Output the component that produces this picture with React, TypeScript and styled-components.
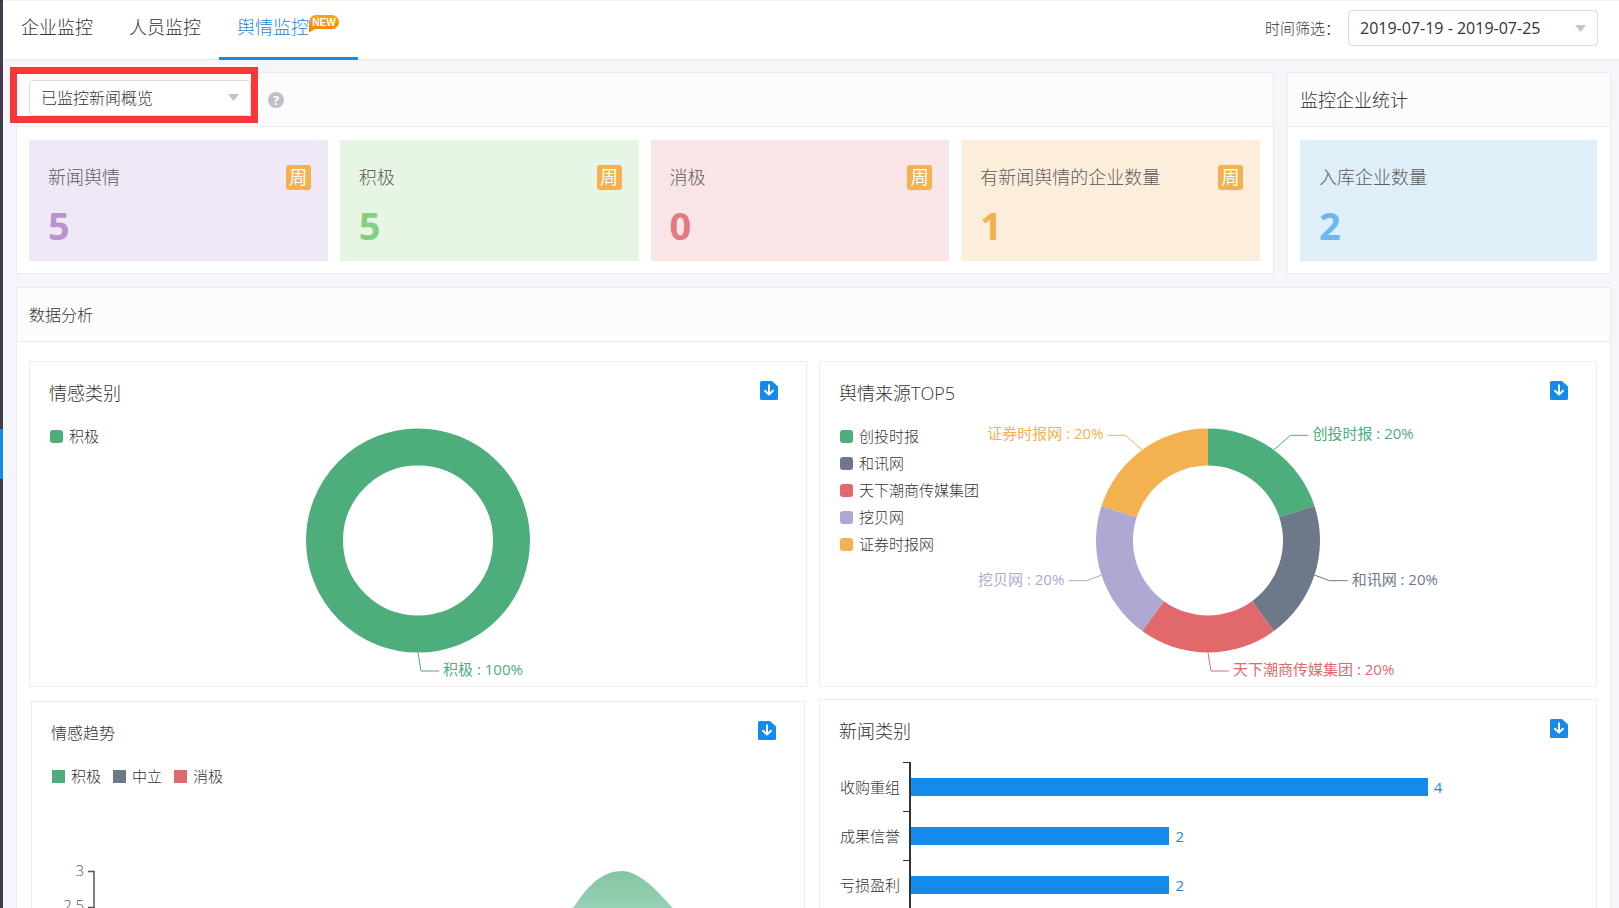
import React from 'react';
import styled, { createGlobalStyle } from 'styled-components';

const palette = {
  blue: '#148aeb',
  green: '#4dae7b',
  slate: '#6d7988',
  red: '#e1696b',
  violet: '#aea8d2',
  orange: '#f4b150',
  line: '#ececee',
};

const GlobalStyle = createGlobalStyle`
  *, *::before, *::after { box-sizing: border-box; }
  body {
    margin: 0;
    background: #f5f5fa;
    color: #333;
    font-family: "Open Sans", "Noto Sans CJK SC", sans-serif;
    font-weight: 300;
    font-size: 16px;
    line-height: 24px;
  }
  h2, h3, ul, dl, dd, p { margin: 0; padding: 0; font-weight: inherit; }
  button, select { font: inherit; color: inherit; }
`;

const Shell = styled.div`
  display: flex;
  height: 100vh;
  overflow: hidden;
`;

const Rail = styled.aside`
  flex: 0 0 3px;
  display: flex;
  align-items: center;
  background: #403c4e;
`;

const RailMarker = styled.span`
  width: 3px;
  height: 50px;
  background: ${palette.blue};
`;

const Page = styled.div`
  flex: 1;
  min-width: 0;
`;

const TopBar = styled.header`
  display: flex;
  align-items: stretch;
  justify-content: space-between;
  height: 60px;
  padding-right: 21px;
  background: #fff;
  border-top: 1px solid #f2f2f4;
  border-bottom: 1px solid #e9e9ee;
`;

const Tabs = styled.nav`
  display: flex;
`;

const Tab = styled.a<{ $active?: boolean }>`
  display: flex;
  align-items: flex-start;
  height: 59px;
  padding: 14px 18px 0;
  font-size: 18px;
  text-decoration: none;
  color: ${(p) => (p.$active ? '#1f87dc' : '#333')};
  border-bottom: 3px solid ${(p) => (p.$active ? '#1f87dc' : 'transparent')};
`;

const NewBadge = styled.svg`
  width: 31px;
  height: 18px;
`;

const Filter = styled.label`
  display: flex;
  align-items: center;
  gap: 8px;
  height: 54px;
  font-size: 15px;
`;

const SelectBox = styled.span<{ $width: number; $regular?: boolean }>`
  display: grid;
  width: ${(p) => p.$width}px;
  font-size: 16px;
  font-weight: ${(p) => (p.$regular ? 400 : 300)};

  > * { grid-area: 1 / 1; }
  > svg { justify-self: end; align-self: center; margin-right: 12px; pointer-events: none; }
`;

const Select = styled.select`
  width: 100%;
  height: 36px;
  padding: 0 11px;
  appearance: none;
  background: #fff;
  border: 1px solid #dcdce0;
  border-radius: 4px;
`;

const Main = styled.main`
  display: flex;
  flex-direction: column;
  gap: 13px;
  padding: 12px 8px 12px 13px;
`;

const Overview = styled.div`
  display: grid;
  grid-template-columns: minmax(0, 1fr) 324px;
  gap: 13px;
`;

const Panel = styled.section`
  background: #fff;
  border: 1px solid ${palette.line};
`;

const PanelHead = styled.div`
  display: flex;
  align-items: center;
  height: 54px;
  padding: 0 12px;
  background: #fcfcfc;
  border-bottom: 1px solid ${palette.line};
`;

const PanelTitle = styled.h2<{ $large?: boolean }>`
  font-size: ${(p) => (p.$large ? 18 : 16)}px;
`;

const Highlighted = styled.div`
  position: relative;
  margin: 0 17px 4px 0;

  &::after {
    content: "";
    position: absolute;
    inset: -13px -7px -7px -19px;
    border: 7px solid #fb3638;
    pointer-events: none;
  }
`;

const HelpButton = styled.button`
  width: 16px;
  height: 16px;
  padding: 0;
  border: 0;
  border-radius: 50%;
  background: #bdc0ca;
  color: #fff;
  font-size: 13px;
  font-weight: 700;
  line-height: 16px;
`;

const Stats = styled.div`
  display: grid;
  grid-auto-flow: column;
  grid-auto-columns: minmax(0, 1fr);
  gap: 12px;
  padding: 13px 13px 12px 12px;
`;

const Stat = styled.dl<{ $bg: string }>`
  height: 121px;
  padding: 25px 17px 0 19px;
  background: ${(p) => p.$bg};
`;

const StatLabel = styled.dt`
  display: flex;
  justify-content: space-between;
  height: 25px;
  font-size: 18px;
  color: #5c5c5c;
`;

const StatValue = styled.dd<{ $color: string }>`
  margin-top: 11px;
  font-family: "Noto Sans", "Open Sans", sans-serif;
  font-size: 38px;
  font-weight: 700;
  line-height: 48px;
  color: ${(p) => p.$color};
`;

const WeekBadge = styled.span`
  width: 25px;
  height: 25px;
  border-radius: 3px;
  background: ${palette.orange};
  color: #fff;
  font-weight: 400;
  line-height: 25px;
  text-align: center;
`;

const Charts = styled.div`
  display: grid;
  grid-template-columns: repeat(2, minmax(0, 1fr));
  gap: 12px;
  padding: 19px 13px 12px 12px;
`;

const ChartCard = styled.article<{ $inset?: boolean }>`
  margin: ${(p) => (p.$inset ? '2px' : '0')};
  background: #fff;
  border: 1px solid ${palette.line};
`;

const ChartHead = styled.div`
  display: flex;
  justify-content: space-between;
  align-items: flex-start;
  padding: 19px 28px 0 19px;
`;

const ChartTitle = styled.h3<{ $small?: boolean }>`
  font-size: ${(p) => (p.$small ? 16 : 18)}px;
`;

const IconButton = styled.button`
  display: block;
  padding: 0;
  border: 0;
  background: none;

  svg { display: block; }
`;

const ChartBody = styled.div`
  display: grid;
  > * { grid-area: 1 / 1; }
`;

const Legend = styled.ul<{ $row?: boolean }>`
  display: flex;
  flex-direction: ${(p) => (p.$row ? 'row' : 'column')};
  justify-self: start;
  align-self: start;
  gap: ${(p) => (p.$row ? 12 : 0)}px;
  margin: 18px 0 0 20px;
  list-style: none;
  font-size: 15px;
`;

const LegendItem = styled.li<{ $color: string; $square?: boolean }>`
  display: flex;
  align-items: center;
  gap: 6px;
  line-height: 27px;

  &::before {
    content: "";
    width: 13px;
    height: 13px;
    border-radius: ${(p) => (p.$square ? 0 : 3)}px;
    background: ${(p) => p.$color};
  }
`;

const DonutSvg = styled.svg`
  justify-self: center;
  width: 560px;
  height: 281px;
  font-size: 15px;
  font-weight: 400;
`;

const TrendSvg = styled.svg`
  width: 100%;
  font-size: 15px;
`;

const Bars = styled.ul`
  margin: 19px 39px 0 20px;
  list-style: none;
  font-size: 15px;
`;

const BarRow = styled.li`
  display: grid;
  grid-template-columns: 60px 6px minmax(0, 1fr);
  column-gap: 3px;
  height: 49px;
  align-items: center;
`;

const Tick = styled.span`
  align-self: start;
  height: 1px;
  background: #333;
`;

const Plot = styled.div`
  display: flex;
  align-items: center;
  align-self: stretch;
  gap: 6px;
  margin-left: -3px;
  border-left: 2px solid #333;
  font-weight: 400;
  color: #2f86d0;
`;

const Bar = styled.span`
  height: 18px;
  background: ${palette.blue};
`;

const Caret = () => (
  <svg width="11" height="7" viewBox="0 0 11 7" aria-hidden="true">
    <path d="M0 0H11L5.5 7Z" fill="#c0c3cb" />
  </svg>
);

const Download = () => (
  <IconButton type="button" aria-label="下载">
    <svg width="18" height="19" viewBox="0 0 18 19" aria-hidden="true">
      <path d="M1.5 0H12L18 5.5V17.5Q18 19 16.5 19H1.5Q0 19 0 17.5V1.5Q0 0 1.5 0Z" fill={palette.blue} />
      <path d="M9 4.2V13.2M5 9.8L9 13.6L13 9.8" fill="none" stroke="#fff" strokeWidth="2" strokeLinecap="round" strokeLinejoin="round" />
    </svg>
  </IconButton>
);

interface Slice {
  name: string;
  percent: number;
  color: string;
}

const CX = 280;
const CY = 135.5;
const OUTER = 112;
const INNER = 75;

const pointAt = (angle: number, r: number) => ({
  x: CX + r * Math.sin(angle),
  y: CY - r * Math.cos(angle),
});

const Donut = ({ slices }: { slices: Slice[] }) => {
  let turn = 0;
  return (
    <DonutSvg viewBox="0 0 560 281" role="img">
      {slices.map((s) => {
        const start = turn * Math.PI * 2;
        turn += s.percent / 100;
        const end = turn * Math.PI * 2;
        const mid = (start + end) / 2;
        const side = Math.sin(mid) < -0.01 ? -1 : 1;
        const edge = pointAt(mid, OUTER);
        const far = pointAt(mid, OUTER + 18);
        const isBottom = Math.cos(mid) < -0.99;
        const elbow = isBottom
          ? { x: CX + 3, y: far.y + 0.5 }
          : { x: far.x + side * (Math.cos(mid) > 0 ? 6 : -2), y: far.y };
        const a = pointAt(start, OUTER);
        const b = pointAt(end, OUTER);
        const c = pointAt(end, INNER);
        const d = pointAt(start, INNER);
        return (
          <g key={s.name}>
            {s.percent === 100 ? (
              <circle cx={CX} cy={CY} r={(OUTER + INNER) / 2} fill="none" stroke={s.color} strokeWidth={OUTER - INNER} />
            ) : (
              <path
                d={`M${a.x} ${a.y}A${OUTER} ${OUTER} 0 0 1 ${b.x} ${b.y}L${c.x} ${c.y}A${INNER} ${INNER} 0 0 0 ${d.x} ${d.y}Z`}
                fill={s.color}
              />
            )}
            <polyline
              points={`${edge.x},${edge.y} ${elbow.x},${elbow.y} ${elbow.x + side * 18},${elbow.y}`}
              fill="none"
              stroke={s.color}
            />
            <text x={elbow.x + side * 22} y={elbow.y + 4} textAnchor={side < 0 ? 'end' : 'start'} fill={s.color}>
              {`${s.name} : ${s.percent}%`}
            </text>
          </g>
        );
      })}
    </DonutSvg>
  );
};

const Trend = () => (
  <TrendSvg viewBox="0 0 772 190" role="img">
    <defs>
      <linearGradient id="trendFill" x1="0" y1="0" x2="0" y2="1">
        <stop offset="0" stopColor="#84c5a1" />
        <stop offset="1" stopColor="#a4dbc4" />
      </linearGradient>
    </defs>
    <path d="M525 190C545 155 562 126 590 126C612 126 640 161 662 190Z" fill="url(#trendFill)" />
    <path d="M56 126.500H62V190M56 162.500H62" fill="none" stroke="#555" strokeWidth="1.5" />
    <g fill="#555" textAnchor="end">
      <text x="52" y="131">3</text>
      <text x="52" y="166">2.5</text>
    </g>
  </TrendSvg>
);

const stats = [
  { label: '新闻舆情', value: 5, bg: '#f0e8f6', color: '#ba92d1' },
  { label: '积极', value: 5, bg: '#e7f6e4', color: '#85d07f' },
  { label: '消极', value: 0, bg: '#fae5e6', color: '#e17b80' },
  { label: '有新闻舆情的企业数量', value: 1, bg: '#fdeedb', color: '#f5b04d' },
];

const mood: Slice[] = [{ name: '积极', percent: 100, color: palette.green }];

const sources: Slice[] = [
  { name: '创投时报', percent: 20, color: palette.green },
  { name: '和讯网', percent: 20, color: palette.slate },
  { name: '天下潮商传媒集团', percent: 20, color: palette.red },
  { name: '挖贝网', percent: 20, color: palette.violet },
  { name: '证券时报网', percent: 20, color: palette.orange },
];

const trendSeries = [
  { name: '积极', color: palette.green },
  { name: '中立', color: palette.slate },
  { name: '消极', color: palette.red },
];

const categories = [
  { name: '收购重组', count: 4 },
  { name: '成果信誉', count: 2 },
  { name: '亏损盈利', count: 2 },
];
const AXIS_MAX = 5;

export default function App() {
  return (
    <>
      <GlobalStyle />
      <Shell>
        <Rail><RailMarker /></Rail>
        <Page>
          <TopBar>
            <Tabs>
              <Tab href="#company">企业监控</Tab>
              <Tab href="#people">人员监控</Tab>
              <Tab href="#opinion" $active aria-current="page">
                舆情监控
                <NewBadge viewBox="0 0 31 18" role="img">
                  <defs>
                    <linearGradient id="badgeFill" x1="0" y1="0" x2="0" y2="1">
                      <stop offset="0" stopColor="#f9a80f" />
                      <stop offset="1" stopColor="#f58105" />
                    </linearGradient>
                  </defs>
                  <path d="M7 0H23A7 7 0 0 1 23 14H6L0 17.500V7A7 7 0 0 1 7 0Z" fill="url(#badgeFill)" />
                  <text x="15" y="11" textAnchor="middle" fontFamily="Liberation Sans, sans-serif" fontSize="10" fontWeight="700" fill="#fff">NEW</text>
                </NewBadge>
              </Tab>
            </Tabs>
            <Filter>
              时间筛选：
              <SelectBox $width={250} $regular>
                <Select defaultValue="week">
                  <option value="week">2019-07-19 - 2019-07-25</option>
                </Select>
                <Caret />
              </SelectBox>
            </Filter>
          </TopBar>

          <Main>
            <Overview>
              <Panel>
                <PanelHead>
                  <Highlighted>
                    <SelectBox $width={222}>
                      <Select aria-label="概览范围" defaultValue="monitored">
                        <option value="monitored">已监控新闻概览</option>
                      </Select>
                      <Caret />
                    </SelectBox>
                  </Highlighted>
                  <HelpButton type="button" aria-label="帮助">?</HelpButton>
                </PanelHead>
                <Stats>
                  {stats.map((s) => (
                    <Stat key={s.label} $bg={s.bg}>
                      <StatLabel>
                        {s.label}
                        <WeekBadge>周</WeekBadge>
                      </StatLabel>
                      <StatValue $color={s.color}>{s.value}</StatValue>
                    </Stat>
                  ))}
                </Stats>
              </Panel>
              <Panel>
                <PanelHead>
                  <PanelTitle $large>监控企业统计</PanelTitle>
                </PanelHead>
                <Stats>
                  <Stat $bg="#dfeffa">
                    <StatLabel>入库企业数量</StatLabel>
                    <StatValue $color="#6cb8ee">2</StatValue>
                  </Stat>
                </Stats>
              </Panel>
            </Overview>

            <Panel>
              <PanelHead>
                <PanelTitle>数据分析</PanelTitle>
              </PanelHead>
              <Charts>
                <ChartCard>
                  <ChartHead>
                    <ChartTitle>情感类别</ChartTitle>
                    <Download />
                  </ChartHead>
                  <ChartBody>
                    <Donut slices={mood} />
                    <Legend>
                      {mood.map((s) => <LegendItem key={s.name} $color={s.color}>{s.name}</LegendItem>)}
                    </Legend>
                  </ChartBody>
                </ChartCard>
                <ChartCard>
                  <ChartHead>
                    <ChartTitle>舆情来源TOP5</ChartTitle>
                    <Download />
                  </ChartHead>
                  <ChartBody>
                    <Donut slices={sources} />
                    <Legend>
                      {sources.map((s) => <LegendItem key={s.name} $color={s.color}>{s.name}</LegendItem>)}
                    </Legend>
                  </ChartBody>
                </ChartCard>
                <ChartCard $inset>
                  <ChartHead>
                    <ChartTitle $small>情感趋势</ChartTitle>
                    <Download />
                  </ChartHead>
                  <ChartBody>
                    <Trend />
                    <Legend $row>
                      {trendSeries.map((s) => (
                        <LegendItem key={s.name} $color={s.color} $square>{s.name}</LegendItem>
                      ))}
                    </Legend>
                  </ChartBody>
                </ChartCard>
                <ChartCard>
                  <ChartHead>
                    <ChartTitle>新闻类别</ChartTitle>
                    <Download />
                  </ChartHead>
                  <Bars>
                    {categories.map((c) => (
                      <BarRow key={c.name}>
                        <span>{c.name}</span>
                        <Tick />
                        <Plot>
                          <Bar style={{ width: `${(c.count / AXIS_MAX) * 100}%` }} />
                          {c.count}
                        </Plot>
                      </BarRow>
                    ))}
                  </Bars>
                </ChartCard>
              </Charts>
            </Panel>
          </Main>
        </Page>
      </Shell>
    </>
  );
}
